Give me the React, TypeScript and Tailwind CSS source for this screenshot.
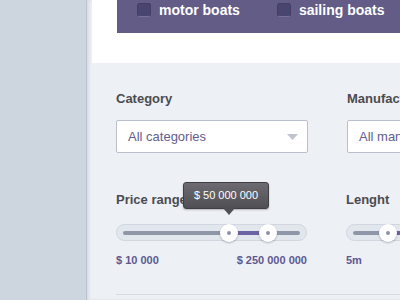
import React from 'react';

const font = { fontFamily: '"Liberation Sans", Arial, sans-serif' };

function Checkbox({ label }: { label: string }) {
  return (
    <label className="flex items-center gap-[8px]">
      <span className="block w-[14px] h-[14px] rounded-[3px] bg-[#4a4570] border border-[#433e66] border-b-[#7770a0]" />
      <span className="text-[14px] font-bold text-white leading-[16px]">{label}</span>
    </label>
  );
}

function Select({ value }: { value: string }) {
  return (
    <div className="h-[33px] bg-white border border-[#b9c0cc] rounded-[2px] flex items-center justify-between pl-[11px] pr-[9px]">
      <span className="text-[13px] text-[#625d8c] whitespace-nowrap">{value}</span>
      <svg width="11" height="6" viewBox="0 0 11 6">
        <path d="M0 0 H11 L5.5 6 Z" fill="#bfc4cd" />
      </svg>
    </div>
  );
}

function Handle({ left }: { left: number }) {
  return (
    <div
      className="absolute top-1/2 w-[18px] h-[18px] -ml-[9px] -mt-[9px] rounded-full bg-white shadow-[0_1px_2px_rgba(60,70,90,0.35)] flex items-center justify-center"
      style={{ left }}
    >
      <span className="block w-[4px] h-[4px] rounded-full bg-[#8b93a4]" />
    </div>
  );
}

function Slider({ from, to, width }: { from: number; to: number | null; width: number }) {
  return (
    <div
      className="relative h-[17px] rounded-full bg-[#e2e6ed] border border-[#d1d6df] px-[6px] flex items-center"
      style={{ width }}
    >
      <div className="relative flex-1 h-[4px] rounded-full bg-[#8e96a7]">
        <div
          className="absolute top-0 h-[4px] bg-[#6b63a3]"
          style={{ left: from, width: to === null ? 200 : to - from }}
        />
        <Handle left={from} />
        {to !== null && <Handle left={to} />}
      </div>
    </div>
  );
}

export default function App() {
  return (
    <div className="flex w-[400px] h-[300px] overflow-hidden bg-[#edf0f5]" style={font}>
      <div className="w-[87px] shrink-0 bg-[#cdd5df] border-r border-[#bac3cf]" />
      <div className="flex-1 pl-[5px] shadow-[inset_2px_0_3px_rgba(150,160,180,0.25)]">
        <div className="h-[63px] bg-white pl-[25px]">
          <div className="h-[33px] bg-[#625c87] flex items-center gap-[37px] pl-[20px] pb-[13px] pt-0 whitespace-nowrap">
            <Checkbox label="motor boats" />
            <Checkbox label="sailing boats" />
          </div>
        </div>

        <div className="pl-[24px] pt-[28px]">
          <div className="flex gap-[39px] w-[400px]">
            <div className="w-[192px] shrink-0">
              <div className="text-[13px] font-bold text-[#4b4b4f] leading-[16px]">Category</div>
              <div className="mt-[13px]">
                <Select value="All categories" />
              </div>
            </div>
            <div className="w-[192px] shrink-0">
              <div className="text-[13px] font-bold text-[#4b4b4f] leading-[16px]">Manufacturer</div>
              <div className="mt-[13px]">
                <Select value="All manufacturers" />
              </div>
            </div>
          </div>

          <div className="flex gap-[39px] w-[400px] mt-[39px]">
            <div className="w-[191px] shrink-0 relative">
              <div className="text-[13px] font-bold text-[#4b4b4f] leading-[16px]">Price range</div>
              <div className="absolute left-[67px] top-[-10px] w-[86px] h-[27px] rounded-[3px] border border-[#3f3e43] bg-gradient-to-b from-[#6d6b71] to-[#504f54] flex items-center justify-center shadow-[0_1px_2px_rgba(0,0,0,0.25)]">
                <span className="text-[11px] text-white leading-none">$ 50 000 000</span>
                <span className="absolute left-[39px] bottom-[-7px] w-0 h-0 border-l-[6px] border-r-[6px] border-t-[7px] border-l-transparent border-r-transparent border-t-[#504f54]" />
              </div>
              <div className="mt-[16px]">
                <Slider from={106} to={145} width={191} />
              </div>
              <div className="mt-[12px] flex justify-between text-[11px] font-bold text-[#5e5890] leading-[14px]">
                <span>$ 10 000</span>
                <span>$ 250 000 000</span>
              </div>
            </div>
            <div className="w-[192px] shrink-0">
              <div className="text-[13px] font-bold text-[#4b4b4f] leading-[16px]">Lenght</div>
              <div className="mt-[16px]">
                <Slider from={35} to={null} width={192} />
              </div>
              <div className="mt-[12px] text-[11px] font-bold text-[#5e5890] leading-[14px]">5m</div>
            </div>
          </div>

          <div className="mt-[27px] h-px bg-[#d6dbe3] w-[400px]" />
        </div>
      </div>
    </div>
  );
}
